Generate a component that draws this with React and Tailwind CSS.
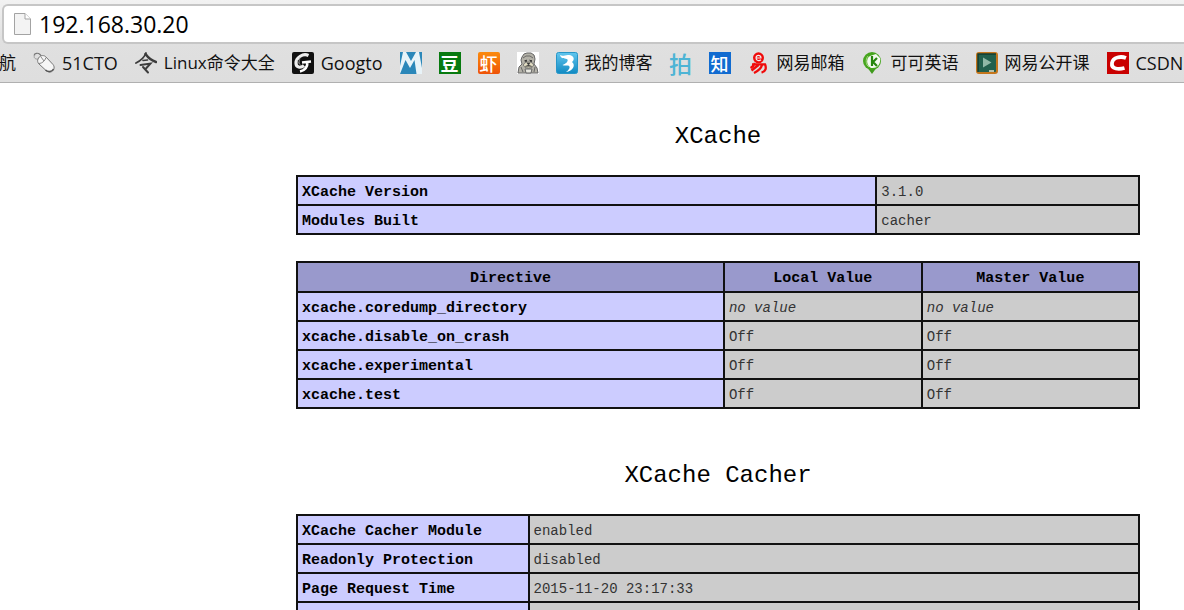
import React from 'react';

const moduleRows = [
  ['XCache Version', '3.1.0'],
  ['Modules Built', 'cacher'],
];

const directives = [
  { name: 'xcache.coredump_directory', local: null, master: null },
  { name: 'xcache.disable_on_crash', local: 'Off', master: 'Off' },
  { name: 'xcache.experimental', local: 'Off', master: 'Off' },
  { name: 'xcache.test', local: 'Off', master: 'Off' },
];

const cacherRows = [
  ['XCache Cacher Module', 'enabled'],
  ['Readonly Protection', 'disabled'],
  ['Page Request Time', '2015-11-20 23:17:33'],
  ['', ''],
];

const cjk = "font-['Noto_Sans_CJK_SC',sans-serif]";

function MouseIcon() {
  return (
    <svg viewBox="0 0 22 22" className="size-[22px] shrink-0" fill="none">
      <path d="M1 3.5C1.500 1 5 .5 7 2.500L9 5" stroke="#777" strokeWidth="1.200" />
      <path d="M2 3C0 5 2 7.500 4.500 7" stroke="#999" />
      <path d="M5 7C6 4 10 2.500 12.500 4.500L20 12.500C22.500 15.500 20.500 19.500 17.500 20C15.500 20.300 14 19.500 12.500 18L6 12C4.500 10.500 4.300 8.500 5 7Z" fill="#f6f6f6" stroke="#777" />
      <path d="M6 11.500C9 11.500 12 9 13 5.500M8 5L11 9" stroke="#888" />
      <path d="M12.500 18C15 20.500 19 20 20.500 17" stroke="#555" strokeWidth="1.500" />
    </svg>
  );
}

function LingIcon() {
  return (
    <svg viewBox="0 0 22 22" className="size-[22px] shrink-0" fill="none" stroke="#3c3c3c" strokeLinecap="round">
      <path d="M11 1C9.500 5 6 8.500 1 11" strokeWidth="1.800" />
      <path d="M10.500 2C13 5.500 16.500 8.500 21 10" strokeWidth="2.400" />
      <path d="M8 8.500L12.500 8" strokeWidth="1.600" />
      <path d="M5.500 13L15.500 11.500L11 16.500" strokeWidth="1.900" />
      <path d="M8 15L13 20.500" strokeWidth="2" />
    </svg>
  );
}

function GoogtoIcon() {
  return (
    <svg viewBox="0 0 22 22" className="size-[22px] shrink-0" fill="none">
      <rect width="22" height="22" rx="2" fill="#111" />
      <path d="M16.500 3.500C11 1 4 5.500 4 11C4 15.500 8.500 16.500 12 13.500" stroke="#eee" strokeWidth="3.200" />
      <path d="M10 10.500L19 9.500M15.500 10C15.500 15 12.500 18.500 8 19.500" stroke="#fff" strokeWidth="2.600" />
      <path d="M8 5L7 12M5 8L9 14" stroke="#aaa" strokeWidth=".6" />
    </svg>
  );
}

function MIcon() {
  return (
    <svg viewBox="0 0 22 22" className="size-[22px] shrink-0">
      <rect width="22" height="22" fill="#e8f3f8" />
      <path d="M0 0H3L0 14ZM6 0H16L11 9ZM19 0H22V16ZM0 22L5.500 8L10 16L14.500 8L16.500 22Z" fill="#2b87b9" />
    </svg>
  );
}

function BulldogIcon() {
  return (
    <svg viewBox="0 0 22 22" className="size-[22px] shrink-0" fill="none">
      <rect width="22" height="22" fill="#fff" />
      <path d="M5 5L7 2L10 1H14L17 3L18 7L17 12L20 16L21 21H1L2 15L5 12L4 8Z" fill="#b4b2a8" stroke="#666" />
      <path d="M6 6L9 4H13L16 6M7 9L10 8M12 8L15 9" stroke="#555" strokeWidth=".8" />
      <circle cx="9" cy="9" r=".9" fill="#222" />
      <circle cx="14" cy="9" r=".9" fill="#222" />
      <ellipse cx="11.500" cy="13" rx="5" ry="3" fill="#e4dfc4" stroke="#666" strokeWidth=".8" />
      <path d="M10 11H13L11.500 13ZM8 14.500L11.500 13L15 14.500" fill="#333" stroke="#444" strokeWidth=".6" />
      <path d="M4 15L6 20M18 15L17 20M8 17H15L14 21H9Z" fill="#e8e8e0" stroke="#666" />
    </svg>
  );
}

function BlogIcon() {
  return (
    <svg viewBox="0 0 22 22" className="size-[22px] shrink-0">
      <defs>
        <linearGradient id="blog" x1="0" y1="0" x2="0" y2="1">
          <stop offset="0" stopColor="#62c6ee" />
          <stop offset="1" stopColor="#118ac2" />
        </linearGradient>
      </defs>
      <rect x=".5" y=".5" width="21" height="21" rx="2" fill="url(#blog)" stroke="#2796c8" />
      <path d="M4 3C7 5 9 2.500 13 3C18 3.500 19 7.500 16 10C20 13 17 19 10 20C13 18 14.500 15.500 13 14C11.500 12.500 9 14.500 6.500 13C9.500 12 12.500 9.500 11.500 7.500C10 5.500 5 8 4 3Z" fill="#fff" />
    </svg>
  );
}

function NeteaseIcon() {
  return (
    <svg viewBox="0 0 22 22" className="size-[22px] shrink-0" fill="none">
      <circle cx="10.500" cy="5.800" r="5.500" fill="#f00a0a" />
      <path d="M8 6H13C13 2.500 8 2.500 8 6C8 9 11.500 9 13 7.800" stroke="#eee" strokeWidth="1.200" />
      <path d="M4 12.300H17C18.500 16 18 19.500 13.500 20.500M7 11C6 13.500 4.500 15 2.500 16M10.500 13L3.500 18.500M14 13C13 17 9 19.500 6 21" stroke="#f00a0a" strokeWidth="2.300" />
    </svg>
  );
}

function KekeIcon() {
  return (
    <svg viewBox="0 0 22 22" className="size-[22px] shrink-0" fill="none">
      <path d="M5 15L10 22L15 15Z" fill="#3f9a1b" />
      <circle cx="10" cy="9" r="9" fill="#46a51e" />
      <path d="M8 4C4 6 4 13 9 16C16 17 19 11 18 6L14 2Z" fill="#f4faef" />
      <path d="M10 4V14M15 6L11 10L15 14" stroke="#26860d" strokeWidth="2.200" />
      <path d="M6 4C3 8 4 13 7 15" stroke="#a8da84" strokeWidth="1" />
    </svg>
  );
}

function OpenCourseIcon() {
  return (
    <svg viewBox="0 0 22 22" className="size-[22px] shrink-0">
      <rect x="1" y="1" width="20" height="20" rx="2" fill="#22604d" stroke="#c4761c" strokeWidth="2" />
      <path d="M2 20V2H20" fill="none" stroke="#123d31" strokeWidth="1.500" />
      <path d="M7 5.500L15.500 10.500L7 15.500Z" fill="#8fb8a6" />
      <path d="M13 19H18" stroke="#e9e2cc" strokeWidth="1.500" />
    </svg>
  );
}

function CsdnIcon() {
  return (
    <svg viewBox="0 0 22 22" className="size-[22px] shrink-0">
      <rect width="22" height="22" fill="#c90000" />
      <path d="M19 6C14 4 6 5 5 11C4 17.500 12 17.500 17.500 16" fill="none" stroke="#fff" strokeWidth="3.800" />
    </svg>
  );
}

const glyphBase = `flex size-[22px] shrink-0 items-center justify-center leading-none ${cjk}`;

const bookmarks = [
  { label: '51CTO', size: 'text-[18px]', icon: <MouseIcon /> },
  { label: 'Linux命令大全', icon: <LingIcon /> },
  { label: 'Googto', size: 'text-[18px]', icon: <GoogtoIcon /> },
  { title: 'M', icon: <MIcon /> },
  {
    title: '豆',
    icon: <span className={`${glyphBase} bg-[#087a10] text-[18px] font-bold text-white`}>豆</span>,
  },
  {
    title: '虾',
    icon: <span className={`${glyphBase} rounded-xs bg-linear-to-b from-[#fb8a0e] to-[#ee5208] text-[18px] font-medium text-white`}>虾</span>,
  },
  { title: 'Bulldog', icon: <BulldogIcon /> },
  { label: '我的博客', icon: <BlogIcon /> },
  {
    title: '拍',
    icon: <span className={`${glyphBase} text-[23px] font-medium text-[#4db4d5]`}>拍</span>,
  },
  {
    title: '知',
    icon: <span className={`${glyphBase} bg-[#116bd0] text-[18px] font-medium text-white`}>知</span>,
  },
  { label: '网易邮箱', icon: <NeteaseIcon /> },
  { label: '可可英语', icon: <KekeIcon /> },
  { label: '网易公开课', icon: <OpenCourseIcon /> },
  { label: 'CSDN', size: 'text-[18px]', icon: <CsdnIcon /> },
];

function BrowserBar() {
  return (
    <header className="overflow-hidden border-b border-[#b0b0b0] bg-linear-to-b from-[#f2f2f2] via-[#e0e0e0] to-[#dedede] pt-1 font-['Open_Sans','Noto_Sans_CJK_SC',sans-serif]">
      <div className="ml-[2px] flex h-10 items-center gap-2 rounded-l-md border-y-2 border-l-2 border-[#c6c6c6] bg-white pl-[10px]">
        <svg viewBox="0 0 17 22" className="h-[22px] w-[17px] shrink-0">
          <path d="M.5 .5H11L16.500 6V21.500H.5Z" fill="#f3f3f3" stroke="#a3a3a3" />
          <path d="M11 .5V6H16.500" fill="#fff" stroke="#a3a3a3" />
        </svg>
        <input
          type="text"
          aria-label="Address"
          defaultValue="192.168.30.20"
          className="min-w-0 flex-1 bg-transparent text-[23px] leading-8 text-black outline-none"
        />
      </div>
      <nav className="flex h-[38px] items-center gap-[17px] text-[17px] leading-6 whitespace-nowrap text-[#111]">
        <a href="#" className="flex w-4 shrink-0 justify-end">航</a>
        {bookmarks.map((item) => (
          <a
            key={item.label || item.title}
            href="#"
            aria-label={item.label || item.title}
            className="flex shrink-0 items-center gap-[7px]"
          >
            {item.icon}
            {item.label && <span className={item.size}>{item.label}</span>}
          </a>
        ))}
      </nav>
    </header>
  );
}

const tableClass = 'w-full table-fixed border-collapse text-left text-[14px] leading-5';
const nameCell = 'h-[29px] border-2 border-[#111] bg-[#ccccff] px-1 pt-1 text-[15px] font-bold text-black';
const valueCell = 'h-[29px] border-2 border-[#111] bg-[#cccccc] px-1 pt-0.5 text-[#333]';
const headCell = 'h-[30px] border-2 border-[#111] bg-[#9999cc] px-1 pt-1 text-center text-[15px] font-bold text-black';

function InfoTable({ rows, nameWidth }) {
  return (
    <table className={tableClass}>
      <tbody>
        {rows.map(([name, value], i) => (
          <tr key={i}>
            <th scope="row" className={`${nameCell} ${nameWidth}`}>{name}</th>
            <td className={valueCell}>{value}</td>
          </tr>
        ))}
      </tbody>
    </table>
  );
}

function DirectiveTable() {
  return (
    <table className={tableClass}>
      <thead>
        <tr>
          <th scope="col" className={headCell}>Directive</th>
          <th scope="col" className={`${headCell} w-[23.5%]`}>Local Value</th>
          <th scope="col" className={`${headCell} w-[25.8%]`}>Master Value</th>
        </tr>
      </thead>
      <tbody>
        {directives.map((d) => (
          <tr key={d.name}>
            <th scope="row" className={nameCell}>{d.name}</th>
            <td className={valueCell}>{d.local || <i>no value</i>}</td>
            <td className={valueCell}>{d.master || <i>no value</i>}</td>
          </tr>
        ))}
      </tbody>
    </table>
  );
}

function App() {
  return (
    <div className="h-screen overflow-hidden bg-white">
      <BrowserBar />
      <main className="pr-11 pl-[296px] font-['Liberation_Mono',monospace]">
        <h2 className="pt-[38px] pb-[22px] text-center text-[24px] leading-8 text-black">XCache</h2>
        <InfoTable rows={moduleRows} nameWidth="w-[68.8%]" />
        <div className="mt-[26px]">
          <DirectiveTable />
        </div>
        <h2 className="pt-[51px] pb-[22px] text-center text-[24px] leading-8 text-black">XCache Cacher</h2>
        <InfoTable rows={cacherRows} nameWidth="w-[27.5%]" />
      </main>
    </div>
  );
}

export default App;
